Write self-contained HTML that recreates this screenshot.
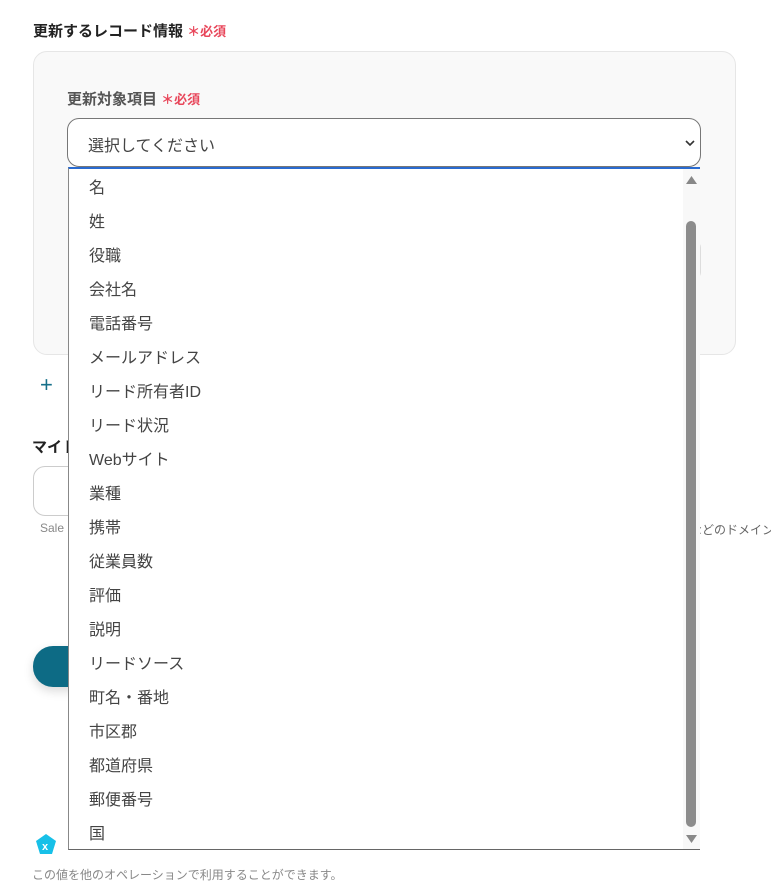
<!DOCTYPE html>
<html><head><meta charset="utf-8"><style>
body{margin:0;width:771px;height:871px;overflow:hidden;background:#fff;font-family:"Liberation Sans","Noto Sans CJK JP",sans-serif;position:relative;color:#333}
.a{position:absolute}
.req{color:#e8465a;font-size:13px;font-weight:bold}
.item{position:absolute;left:20px;font-size:16px;color:#444;line-height:20px}
</style></head><body>
<div class="a" style="left:33px;top:20px;font-size:15px;font-weight:bold;color:#222">更新するレコード情報 <span class="req">＊必須</span></div>
<div class="a" style="left:33px;top:51px;width:701px;height:302px;background:#f9f9f9;border:1px solid #e6e6e6;border-radius:14px"></div>
<div class="a" style="left:67px;top:88px;font-size:15px;font-weight:bold;color:#555">更新対象項目 <span class="req">＊必須</span></div>
<div class="a" style="left:67px;top:118px;width:634px;height:49px;background:#fff;border:1px solid #777;border-radius:12px;box-sizing:border-box"></div>
<div class="a" style="left:88px;top:132px;font-size:16px;color:#444">選択してください</div>
<svg class="a" style="left:685px;top:139px" width="10" height="8"><path d="M1 2l4 4 4-4" fill="none" stroke="#333" stroke-width="1.6"/></svg>
<div class="a" style="left:688px;top:240px;width:12px;height:38px;border:1px solid #ddd;border-left:none;border-radius:0 8px 8px 0;background:#fff"></div>
<div class="a" style="left:40px;top:372px;font-size:22px;color:#16708a">+</div>
<div class="a" style="left:32px;top:436px;font-size:15px;font-weight:bold;color:#222">マイト</div>
<div class="a" style="left:33px;top:466px;width:60px;height:48px;border:1px solid #ccc;border-radius:12px;background:#fff"></div>
<div class="a" style="left:40px;top:521px;font-size:12px;color:#888">Sale</div>
<div class="a" style="left:690px;top:521px;font-size:12px;color:#666;white-space:nowrap">などのドメイン</div>
<div class="a" style="left:33px;top:646px;width:80px;height:41px;background:#0d6b85;border-radius:20px;box-shadow:0 4px 10px rgba(0,0,0,.15)"></div>
<svg class="a" style="left:34px;top:833px" width="24" height="24"><path d="M12 1l10 7-4 13H6L2 8z" fill="#17c0e8"/><text x="8" y="17" font-size="11" font-weight="bold" fill="#fff" font-family="Liberation Sans">x</text></svg>
<div class="a" style="left:32px;top:866px;font-size:12px;color:#888">この値を他のオペレーションで利用することができます。</div>
<div class="a" style="left:68px;top:167px;width:632px;height:683px;background:#fff;border-left:1px solid #888;border-bottom:1px solid #666;border-top:2px solid #2a6bd0;box-sizing:border-box">
<div class="item" style="top:10px">名</div>
<div class="item" style="top:44px">姓</div>
<div class="item" style="top:78px">役職</div>
<div class="item" style="top:112px">会社名</div>
<div class="item" style="top:146px">電話番号</div>
<div class="item" style="top:180px">メールアドレス</div>
<div class="item" style="top:214px">リード所有者ID</div>
<div class="item" style="top:248px">リード状況</div>
<div class="item" style="top:282px">Webサイト</div>
<div class="item" style="top:316px">業種</div>
<div class="item" style="top:350px">携帯</div>
<div class="item" style="top:384px">従業員数</div>
<div class="item" style="top:418px">評価</div>
<div class="item" style="top:452px">説明</div>
<div class="item" style="top:486px">リードソース</div>
<div class="item" style="top:520px">町名・番地</div>
<div class="item" style="top:554px">市区郡</div>
<div class="item" style="top:588px">都道府県</div>
<div class="item" style="top:622px">郵便番号</div>
<div class="item" style="top:656px">国</div>
<div class="a" style="left:614px;top:0;width:17px;height:680px;background:#f8f8f8"></div>
<svg class="a" style="left:616px;top:6px" width="13" height="10"><path d="M6.5 1L12 9H1z" fill="#888"/></svg>
<div class="a" style="left:617px;top:52px;width:10px;height:606px;background:#8c8c8c;border-radius:5px"></div>
<svg class="a" style="left:616px;top:665px" width="13" height="10"><path d="M1 1h11L6.5 9z" fill="#888"/></svg>
</div>
</body></html>
